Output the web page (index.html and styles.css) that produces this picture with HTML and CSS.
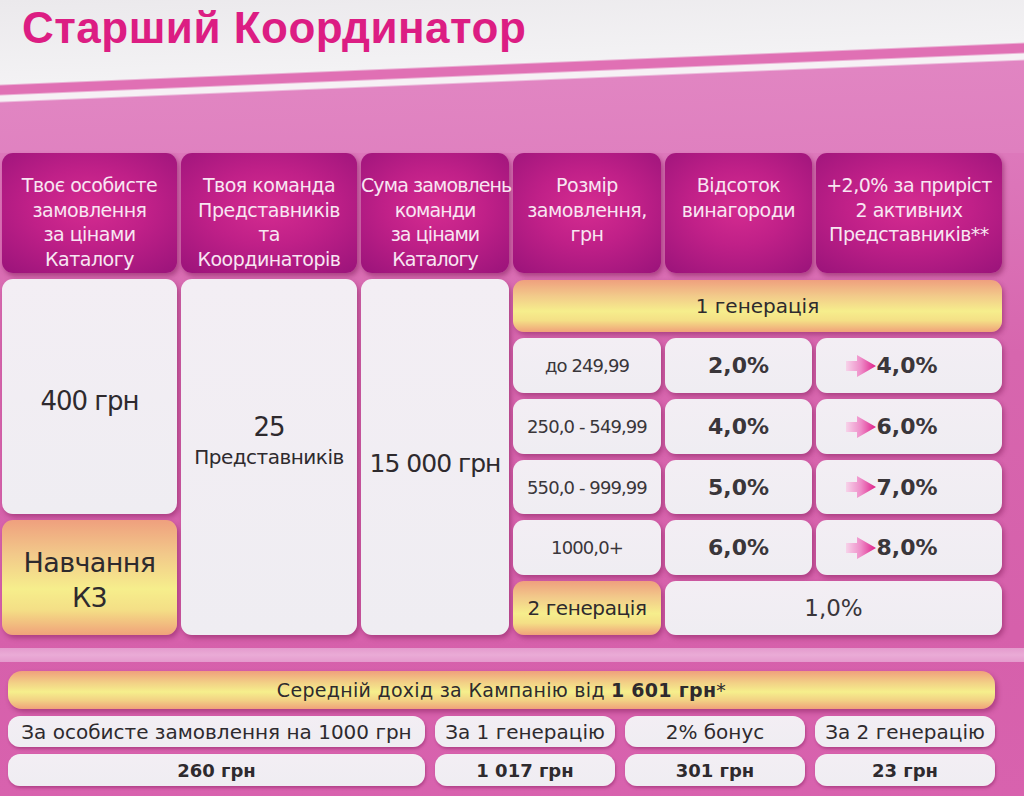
FILE: index.html
```html
<!DOCTYPE html>
<html lang="uk">
<head>
<meta charset="utf-8">
<title>Старший Координатор</title>
<link rel="stylesheet" href="styles.css">
</head>
<body>
<div class="page">
  <header class="top">
    <h1 class="title">Старший Координатор</h1>
  </header>
  <main class="board">
    <div class="grid">
      <div class="hcell">Твоє особисте<br>замовлення<br>за цінами<br>Каталогу</div>
      <div class="hcell">Твоя команда<br>Представників<br>та<br>Координаторів</div>
      <div class="hcell tight">Сума замовлень<br>команди<br>за цінами<br>Каталогу</div>
      <div class="hcell">Розмір<br>замовлення,<br>грн</div>
      <div class="hcell">Відсоток<br>винагороди</div>
      <div class="hcell">+2,0% за приріст<br>2 активних<br>Представників**</div>

      <div class="wcell big personal">400 грн</div>
      <div class="ycell big training">Навчання<br>К3</div>
      <div class="wcell team"><span class="big">25</span><span class="mid">Представників</span></div>
      <div class="wcell big sum">15 000 грн</div>

      <div class="ycell gen1">1 генерація</div>

      <div class="wcell range">до 249,99</div>
      <div class="wcell pct">2,0%</div>
      <div class="wcell pct up"><svg class="arrow" viewBox="0 0 30 22" width="30" height="22"><use href="#arr"/></svg>4,0%</div>

      <div class="wcell range">250,0 - 549,99</div>
      <div class="wcell pct">4,0%</div>
      <div class="wcell pct up"><svg class="arrow" viewBox="0 0 30 22" width="30" height="22"><use href="#arr"/></svg>6,0%</div>

      <div class="wcell range">550,0 - 999,99</div>
      <div class="wcell pct">5,0%</div>
      <div class="wcell pct up"><svg class="arrow" viewBox="0 0 30 22" width="30" height="22"><use href="#arr"/></svg>7,0%</div>

      <div class="wcell range">1000,0+</div>
      <div class="wcell pct">6,0%</div>
      <div class="wcell pct up"><svg class="arrow" viewBox="0 0 30 22" width="30" height="22"><use href="#arr"/></svg>8,0%</div>

      <div class="ycell gen2">2 генерація</div>
      <div class="wcell pct gen2val">1,0%</div>
    </div>

    <div class="band"></div>

    <div class="summary">
      <div class="ycell avg">Середній дохід за Кампанію від <b>1 601 грн</b>*</div>
      <div class="srow">
        <div class="wcell lbl">За особисте замовлення на 1000 грн</div>
        <div class="wcell lbl">За 1 генерацію</div>
        <div class="wcell lbl">2% бонус</div>
        <div class="wcell lbl">За 2 генерацію</div>
      </div>
      <div class="srow">
        <div class="wcell val">260 грн</div>
        <div class="wcell val">1 017 грн</div>
        <div class="wcell val">301 грн</div>
        <div class="wcell val">23 грн</div>
      </div>
    </div>
  </main>
</div>

<svg class="defs" width="0" height="0" aria-hidden="true">
  <defs>
    <linearGradient id="ag" x1="0" y1="0" x2="1" y2="0">
      <stop offset="0" stop-color="#f7d3ea"/>
      <stop offset="0.5" stop-color="#ee8cc8"/>
      <stop offset="1" stop-color="#de1f88"/>
    </linearGradient>
    <symbol id="arr" viewBox="0 0 30 22">
      <path d="M0 6 H11 V0 L30 11 L11 22 V16 H0 Z" fill="url(#ag)"/>
    </symbol>
  </defs>
</svg>
</body>
</html>
```

FILE: styles.css
```css
html, body {
  margin: 0;
  padding: 0;
}
body {
  width: 1024px;
  height: 796px;
  overflow: hidden;
  font-family: "DejaVu Sans", "Liberation Sans", sans-serif;
  color: #2e2a2e;
  background: #d964ae;
}
.page {
  width: 1024px;
  height: 796px;
  display: flex;
  flex-direction: column;
}
.top {
  height: 153px;
  flex: none;
  background: linear-gradient(177.65deg,
    #ebe9ec 0px, #f3f2f4 84px,
    #e070b4 86px, #e070b4 94px,
    #f6f1f5 96px, #f6f1f5 101px,
    #e185c2 103px, #df7fbf 195px);
}
.title {
  margin: 0;
  padding: 3px 0 0 22px;
  font-family: "Liberation Sans", Arial, sans-serif;
  font-weight: bold;
  font-size: 44px;
  line-height: 50px;
  color: #dc1d83;
  letter-spacing: 0.5px;
}
.board {
  flex: 1;
  background: linear-gradient(180deg, #dd78bb 0px, #d766ae 200px, #d660ab 480px, #d862ae 643px);
}
.grid {
  display: grid;
  margin-left: 2px;
  width: 1000px;
  grid-template-columns: 175px 176px 148px 148px 147px 186px;
  grid-template-rows: 120px 53px 55px 55px 54px 55px 54px;
  column-gap: 4px;
  row-gap: 6px;
}
.hcell {
  border-radius: 11px;
  background: radial-gradient(ellipse 75% 70% at 50% 45%, #d52c90 0%, #c02088 45%, #9c147b 100%);
  color: #f8e6f2;
  font-size: 19px;
  line-height: 24.5px;
  text-align: center;
  padding-top: 20px;
  box-sizing: border-box;
  box-shadow: 2px 3px 5px rgba(110, 10, 70, 0.45);
  letter-spacing: -0.5px;
  white-space: nowrap;
}
.hcell.tight {
  letter-spacing: -0.9px;
}
.wcell, .ycell {
  border-radius: 11px;
  display: flex;
  align-items: center;
  justify-content: center;
  text-align: center;
  box-shadow: 2px 3px 5px rgba(120, 20, 80, 0.45);
}
.wcell {
  background: linear-gradient(180deg, #f3eef4 0%, #efedf2 100%);
}
.ycell {
  background: linear-gradient(180deg, #efa07e 0%, #f2c98a 30%, #f6ee8c 60%, #f4df86 78%, #f0a27a 100%);
}
.big {
  font-size: 26px;
  letter-spacing: -1px;
}
.personal {
  grid-column: 1;
  grid-row: 2 / 6;
  padding-top: 8px;
}
.training {
  grid-column: 1;
  grid-row: 6 / 8;
  font-size: 27px;
  letter-spacing: -0.6px;
  line-height: 35px;
  padding-top: 4px;
}
.team {
  grid-column: 2;
  grid-row: 2 / 8;
  flex-direction: column;
  padding-bottom: 36px;
}
.team .big {
  line-height: 36px;
}
.team .mid {
  font-size: 20px;
  letter-spacing: -0.5px;
}
.sum {
  grid-column: 3;
  grid-row: 2 / 8;
  padding-top: 12px;
  font-size: 25px;
  white-space: nowrap;
}
.gen1 {
  grid-column: 4 / 7;
  grid-row: 2;
  font-size: 20px;
  margin-top: 1px;
}
.range {
  font-size: 18px;
  letter-spacing: -0.9px;
  color: #3a363a;
  white-space: nowrap;
}
.pct {
  font-size: 22px;
  font-weight: bold;
  color: #3a363a;
}
.up {
  padding-right: 34px;
}
.arrow {
  width: 30px;
  height: 22px;
  flex: none;
}
.gen2 {
  grid-column: 4;
  grid-row: 7;
  font-size: 20px;
  letter-spacing: -0.4px;
}
.gen2val {
  grid-column: 5 / 7;
  font-weight: normal;
  font-size: 23px;
}
.band {
  height: 14px;
  margin-top: 13px;
  background: linear-gradient(180deg, #e49bcd, #eaabd6 50%, #e49bcd);
}
.summary {
  margin: 9px 0 0 8px;
  width: 987px;
  display: flex;
  flex-direction: column;
  gap: 7px;
}
.avg {
  height: 38px;
  font-size: 19px;
  letter-spacing: 0.3px;
  background: linear-gradient(180deg, #f0a07c 0%, #f2cf86 30%, #f6ef8c 55%, #f2d084 78%, #f0a27a 100%);
  border-radius: 14px;
}
.avg b {
  font-weight: bold;
  margin-left: 6px;
}
.srow {
  display: grid;
  grid-template-columns: 417px 180px 180px 180px;
  column-gap: 10px;
}
.srow .wcell {
  border-radius: 12px;
  box-shadow: 1px 2px 3px rgba(120, 20, 80, 0.4);
}
.lbl {
  height: 31px;
  font-size: 20px;
  letter-spacing: 0;
  white-space: nowrap;
}
.val {
  height: 32px;
  font-size: 18px;
  font-weight: bold;
}
.defs {
  position: absolute;
  width: 0;
  height: 0;
}
```
